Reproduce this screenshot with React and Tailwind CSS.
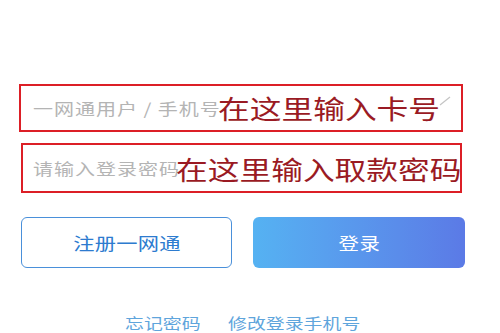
import React from 'react';

const cjk = { fontFamily: '"Noto Sans CJK SC", "Noto Sans", sans-serif' };

// the reference is stretched sideways, so glyphs get scale-x instead of big tracking
const App = () => {
  return (
    <div className="w-[500px] h-[333px] bg-white overflow-hidden" style={cjk}>
      <div className="pt-[84px] pl-[19px]">
        {/* 卡号输入框 */}
        <div className="relative w-[444px] h-[48px] border-2 border-[#dc1f26] flex items-center pl-[12px]">
          <span className="inline-block origin-left scale-x-[1.25] text-[16px] tracking-[0.8px] text-[#b4b4b4] whitespace-nowrap">
            一网通用户 / 手机号
          </span>
          <span className="absolute left-[197px] top-[2px] inline-block origin-left scale-x-[1.22] text-[26px] leading-[40px] text-[#9a1a23] whitespace-nowrap">
            在这里输入卡号
          </span>
          <svg className="absolute left-[418px] top-[10px]" width="12" height="10" viewBox="0 0 12 10">
            <path d="M1 9 L11 1" stroke="#c4c4c4" strokeWidth="1.2" fill="none" />
          </svg>
        </div>

        {/* 密码输入框 */}
        <div className="relative mt-[11px] ml-[2px] w-[441px] h-[50px] border-2 border-[#dc1f26] flex items-center pl-[10px]">
          <span className="inline-block origin-left scale-x-[1.25] text-[16px] tracking-[0.8px] text-[#b4b4b4] whitespace-nowrap">
            请输入登录密码
          </span>
          <span className="absolute left-[153px] top-[4px] inline-block origin-left scale-x-[1.22] text-[26px] leading-[40px] text-[#9a1a23] whitespace-nowrap">
            在这里输入取款密码
          </span>
        </div>

        {/* 按钮 */}
        <div className="mt-[24px] ml-[2px] flex gap-[21px]">
          <button className="w-[211px] h-[51px] rounded-[6px] border-[1.5px] border-[#4a90da] bg-white flex items-center justify-center">
            <span className="inline-block scale-x-[1.25] text-[17px] tracking-[0.2px] text-[#2d7bcf]">注册一网通</span>
          </button>
          <button className="w-[212px] h-[51px] rounded-[6px] bg-gradient-to-r from-[#55b2f2] to-[#5b7ae6] flex items-center justify-center">
            <span className="inline-block scale-x-[1.2] text-[17px] tracking-[0.5px] text-white">登录</span>
          </button>
        </div>
      </div>

      {/* 底部链接 */}
      <div className="mt-[44px] flex pl-[125px] gap-[43px] text-[15px] text-[#5fa5dc]">
        <span className="inline-block origin-left scale-x-[1.26]">忘记密码</span>
        <span className="inline-block origin-left scale-x-[1.26]">修改登录手机号</span>
      </div>
    </div>
  );
};

export default App;
